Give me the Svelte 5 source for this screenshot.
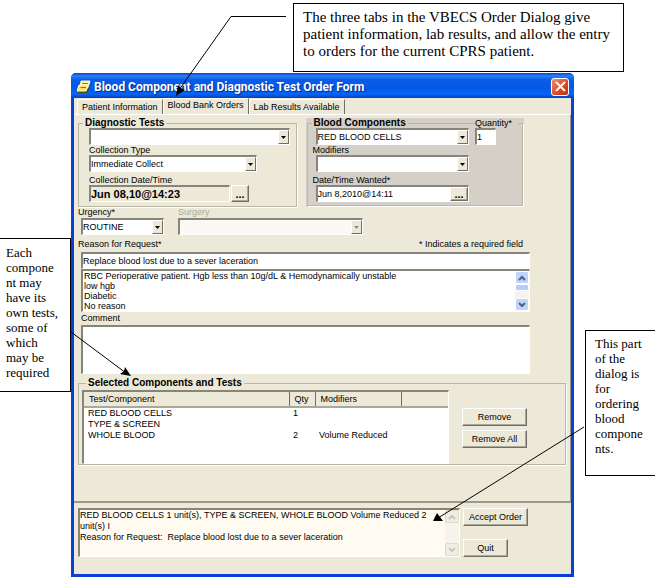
<script>
  const tabs = ['Patient Information', 'Blood Bank Orders', 'Lab Results Available'];
  let active = $state(1);
  let quantity = $state('1');
  let wanted = $state('Jun 8,2010@14:11');
  let collected = $state('Jun 08,10@14:23');
  let reason = $state('Replace blood lost due to a sever laceration');
  let comment = $state('');

  const reasons = [
    'RBC Perioperative patient. Hgb less than 10g/dL & Hemodynamically unstable',
    'low hgb',
    'Diabetic',
    'No reason'
  ];
  const items = [
    { name: 'RED BLOOD CELLS', qty: '1', modifiers: '' },
    { name: 'TYPE & SCREEN', qty: '', modifiers: '' },
    { name: 'WHOLE BLOOD', qty: '2', modifiers: 'Volume Reduced' }
  ];
  const summary =
    'RED BLOOD CELLS 1 unit(s), TYPE & SCREEN, WHOLE BLOOD Volume Reduced 2\nunit(s) I\nReason for Request:  Replace blood lost due to a sever laceration';
</script>

{#snippet combo(id, value, disabled = false, label = undefined)}
  <span class="combo" class:disabled>
    <select {id} {disabled} aria-label={label}><option>{value}</option></select>
    <span class="drop" aria-hidden="true">
      <svg width="5" height="3" viewBox="0 0 5 3"><path d="M0 0H5L2.5 3Z" fill="currentColor" /></svg>
    </span>
  </span>
{/snippet}

{#snippet scrollbar(off)}
  <span class="scroll" class:off aria-hidden="true">
    <span class="knob"><svg width="8" height="6" viewBox="0 0 8 6"><path d="M1 5L4 2L7 5" /></svg></span>
    {#if !off}<span class="thumb"></span>{/if}
    <span class="knob last"><svg width="8" height="6" viewBox="0 0 8 6"><path d="M1 1L4 4L7 1" /></svg></span>
  </span>
{/snippet}

<div class="page">
  <aside class="note top">
    The three tabs in the VBECS Order Dialog give patient information, lab results, and allow the entry to orders for the current CPRS patient.
  </aside>

  <div class="row">
    <aside class="note left">Each component may have its own tests, some of which may be required</aside>

    <main class="window">
      <header class="title">
        <svg width="14" height="14" viewBox="0 0 14 14">
          <path d="M4 1H13L11 8H3Z" fill="#fff3a0" stroke="#f8f4d0" />
          <path d="M2 5H11L9 11H0Z" fill="#ffe45c" stroke="#fffbe0" />
          <path d="M1 12.500H10L13 5" fill="none" stroke="#4a4420" />
          <path d="M5 3.500H11M3.500 7.500H9" stroke="#8a7b20" />
        </svg>
        <h1>Blood Component and Diagnostic Test Order Form</h1>
        <button class="close" aria-label="Close">
          <svg width="11" height="11" viewBox="0 0 11 11"><path d="M1 1L10 10M10 1L1 10" stroke="#fff" stroke-width="2" /></svg>
        </button>
      </header>

      <div class="tabs" role="tablist">
        {#each tabs as tab, i}
          <button role="tab" aria-selected={active === i} class:active={active === i} onclick={() => (active = i)}>{tab}</button>
        {/each}
      </div>

      <section class="panel">
        <div class="groups">
          <fieldset class="group tests">
            <legend>Diagnostic Tests</legend>
            {@render combo('test', '', false, 'Diagnostic Tests')}
            <label class="cap" for="ctype">Collection Type</label>
            <div class="short">{@render combo('ctype', 'Immediate Collect')}</div>
            <label class="cap date" for="cdate">Collection Date/Time</label>
            <div class="pick">
              <input id="cdate" class="sunk bold" bind:value={collected} />
              <button class="dots" aria-label="Choose collection date">...</button>
            </div>
          </fieldset>

          <div class="shade">
            <fieldset class="group">
              <legend>Blood Components</legend>
              <div class="split">
                <div class="main">
                  {@render combo('component', 'RED BLOOD CELLS', false, 'Blood Components')}
                  <label class="cap" for="mods">Modifiers</label>
                  {@render combo('mods', '')}
                  <label class="cap date" for="wdate">Date/Time Wanted*</label>
                  <div class="inset">
                    <input id="wdate" bind:value={wanted} />
                    <button class="dots" aria-label="Choose wanted date">...</button>
                  </div>
                </div>
                <div class="qty">
                  <label for="qty">Quantity*</label>
                  <input id="qty" class="sunk" bind:value={quantity} />
                </div>
              </div>
            </fieldset>
          </div>
        </div>

        <div class="order">
          <div class="urgency">
            <label for="urgency">Urgency*</label>
            <div class="indent">{@render combo('urgency', 'ROUTINE')}</div>
          </div>
          <div class="surgery">
            <label for="surgery">Surgery</label>
            {@render combo('surgery', '', true)}
          </div>
        </div>

        <div class="heads">
          <label for="reason">Reason for Request*</label>
          <span>* Indicates a required field</span>
        </div>
        <div class="wide">
          <input id="reason" class="sunk" bind:value={reason} />
          <div class="sunk listbox">
            <ul role="listbox" aria-label="Reasons">
              {#each reasons as r}<li role="option" aria-selected="false">{r}</li>{/each}
            </ul>
            {@render scrollbar(false)}
          </div>
          <label for="comment">Comment</label>
          <textarea id="comment" class="sunk" bind:value={comment}></textarea>
        </div>

        <fieldset class="group selected">
          <legend>Selected Components and Tests</legend>
          <div class="listed">
            <div class="sunk grid">
              <table>
                <thead>
                  <tr><th class="c1">Test/Component</th><th class="c2">Qty</th><th class="c3">Modifiers</th><th></th></tr>
                </thead>
                <tbody>
                  {#each items as item}
                    <tr><td>{item.name}</td><td>{item.qty}</td><td>{item.modifiers}</td><td></td></tr>
                  {/each}
                </tbody>
              </table>
            </div>
            <div class="actions">
              <button class="btn">Remove</button>
              <button class="btn">Remove All</button>
            </div>
          </div>
        </fieldset>
      </section>

      <footer>
        <div class="sunk memo">
          <textarea readonly aria-label="Order summary" value={summary}></textarea>
          {@render scrollbar(true)}
        </div>
        <div class="finish">
          <button class="btn">Accept Order</button>
          <button class="btn quit">Quit</button>
        </div>
      </footer>
    </main>

    <aside class="note right">This part of the dialog is for ordering blood components.</aside>
  </div>

  <svg class="arrow a1" width="116" height="82" viewBox="0 0 116 82">
    <path d="M116 1.500H61L9 75" /><path class="head" d="M6 81L8 70L11 73L15 75Z" />
  </svg>
  <svg class="arrow a2" width="62" height="47" viewBox="0 0 62 47">
    <path d="M1 1L56 42" /><path class="head" d="M61 45L50 43L54 40L55 36Z" />
  </svg>
  <svg class="arrow a3" width="156" height="98" viewBox="0 0 156 98">
    <path d="M155 1L9 92" /><path class="head" d="M4 95L8 87L11 91L14 95Z" />
  </svg>
</div>

<style>
  :global(body) { margin: 0; background: #fff; }
  .page { position: relative; padding-top: 3px; color: #000; font: 9px/11px 'Liberation Sans', Arial, sans-serif; }
  .page * { box-sizing: border-box; }
  input, select, textarea, button { font: inherit; color: inherit; margin: 0; padding: 0; border: 0; border-radius: 0; background: none; min-width: 0; }

  .note { border: 1px solid #000; background: #fff; font-family: 'Liberation Serif', 'Times New Roman', serif; }
  .top { margin: 0 31px 0 293px; min-height: 69px; padding: 5px 9px; font-size: 15px; line-height: 17px; }
  .row { display: flex; align-items: flex-start; }
  .left, .right { font-size: 13px; line-height: 15px; overflow-wrap: anywhere; flex: none; }
  .left { width: 71px; min-height: 154px; margin-top: 166px; padding: 6px 10px 0 6px; border-left: 0; }
  .right { width: 70px; min-height: 146px; margin: 258px 0 0 11px; padding: 5px 6px 0 9px; border-right: 0; }

  .window { flex: 1; min-width: 0; margin-top: 1px; border: 3px solid #0a3fd8; border-top: 0; border-radius: 5px 5px 0 0; background: #ece9d8; }
  .title { display: flex; align-items: center; gap: 3px; height: 25px; margin: 0 -3px; padding: 2px 5px 0 6px; border-radius: 5px 5px 0 0; background: linear-gradient(#0a45c8, #2a80f8 3px, #0a5be8 7px, #0658ea 16px, #0866f8 21px, #0340b8); }
  h1 { flex: 1; margin: 0; color: #fff; font: bold 12px/16px Roboto, 'Noto Sans', sans-serif; white-space: nowrap; text-shadow: 1px 1px 1px #0a2a80; }
  .close { display: grid; place-items: center; width: 18px; height: 18px; border: 1px solid #fff; border-radius: 3px; background: linear-gradient(135deg, #f09070, #e0502c 50%, #b83010); }

  .tabs { display: flex; align-items: flex-end; height: 16px; padding-left: 3px; }
  .tabs button { height: 15px; padding: 0 4px; border: 1px solid #fff; border-right: 1px solid #716f64; border-bottom: 0; white-space: nowrap; }
  .tabs .active { height: 16px; padding-bottom: 3px; }

  .panel { padding: 3px 4px 36px 4px; border-top: 1px solid #fff; border-right: 1px solid #9d9a8a; border-bottom: 2px solid #9d9a8a; }
  .groups { display: grid; grid-template-columns: repeat(2, minmax(0, 1fr)); gap: 9px; padding-right: 42px; }
  .group { min-width: 0; margin: 0; padding: 0; border: 1px solid #b9b6a6; box-shadow: 1px 1px #fff; }
  legend { margin-left: 4px; padding: 0 2px; font: bold 10px/10px 'Liberation Sans', Arial, sans-serif; }
  .tests { padding: 0 6px 3px 10px; }
  .tests legend { margin-left: -6px; }
  .shade { padding: 0 1px 1px; background: #d4d0c8; }
  .shade .group { padding: 0 4px 3px 8px; }
  .shade legend { margin-left: -4px; }
  .shade .cap { margin-left: -3px; }

  .combo, .sunk, .inset { border: 1px solid #fff; border-top: 2px solid #87847a; border-left: 2px solid #87847a; background: #fff; }
  .combo { display: flex; height: 17px; width: 100%; }
  .combo select { flex: 1; appearance: none; line-height: 13px; }
  .combo select:disabled { opacity: 1; }
  .drop, .dots, .btn { border: 1px solid; border-color: #fff #716f64 #716f64 #fff; background: #ece9d8; }
  .dots, .btn { box-shadow: inset -1px -1px #aca899; }
  .drop { display: grid; place-items: center; width: 11px; }
  .disabled { background: #faf9f4; color: #8f8c80; }
  .cap { display: block; height: 10px; line-height: 10px; white-space: nowrap; }
  .date { margin-top: 3px; }
  .short { width: 168px; }
  .pick { display: flex; gap: 1px; width: 160px; }
  .pick input { flex: 1; background: #ece9d8; }
  .bold { font: bold 11px/13px 'Liberation Sans', Arial, sans-serif; }
  .dots { flex: none; width: 18px; font: bold 11px/8px 'Liberation Sans', Arial, sans-serif; }
  .sunk { height: 17px; }
  .inset { display: flex; height: 17px; }
  .inset input { flex: 1; }
  .split { display: flex; gap: 6px; }
  .main { flex: 1; min-width: 0; }
  .qty { width: 43px; margin-top: -10px; }
  .qty label { display: block; height: 10px; line-height: 10px; background: #d4d0c8; }
  .qty input { display: block; width: 21px; }

  .order { display: flex; gap: 14px; }
  .order label { display: block; height: 11px; }
  .urgency { width: 86px; }
  .indent { padding-left: 3px; }
  .surgery { width: 185px; color: #aca899; }
  .heads { display: flex; justify-content: space-between; height: 17px; padding: 4px 43px 0 0; }
  .wide { display: flex; flex-direction: column; padding: 0 36px 0 3px; }
  .wide label { height: 13px; line-height: 13px; }
  .listbox { display: flex; height: 43px; }
  ul { flex: 1; margin: 0; padding: 0 0 0 1px; list-style: none; line-height: 10px; }
  .wide textarea { height: 49px; resize: none; }

  .scroll { display: flex; flex-direction: column; width: 14px; background: #f4f3ec; }
  .knob { display: grid; place-items: center; height: 13px; border: 1px solid #fff; border-radius: 2px; background: #c2d3fc; }
  .knob path { fill: none; stroke: #4d6185; stroke-width: 2; }
  .last { margin-top: auto; }
  .thumb { height: 7px; border: 1px solid #fff; border-radius: 2px; background: #b8ccfa; }
  .off .knob { background: #f0eee4; border-color: #dedbcc; }
  .off .knob path { stroke: #c9c7ba; }

  .selected { margin-top: 4px; padding: 2px 3px 0 3px; }
  .listed { display: flex; }
  .grid { flex: 1; height: 74px; }
  table { width: 100%; border-collapse: collapse; table-layout: fixed; }
  th { height: 15px; padding: 0 0 0 5px; text-align: left; font-weight: normal; background: #ece9d8; border-right: 1px solid #716f64; border-bottom: 2px solid #aca899; }
  th:last-child { border-right: 0; }
  td { height: 11px; padding: 0 0 0 4px; white-space: nowrap; }
  .c1 { width: 205px; }
  .c2 { width: 26px; }
  .c3 { width: 86px; }
  .actions { display: grid; gap: 4px; align-content: start; width: 113px; padding: 18px 35px 0 13px; }
  .btn { height: 18px; white-space: nowrap; }

  footer { display: flex; gap: 3px; padding: 5px 43px 17px 4px; }
  .memo { flex: 1; display: flex; height: 49px; background: #fffbf0; }
  .memo textarea { flex: 1; resize: none; overflow: hidden; white-space: pre-wrap; }
  .finish { display: flex; flex-direction: column; justify-content: space-between; width: 65px; }
  .quit { width: 45px; }

  .arrow { position: absolute; pointer-events: none; fill: none; stroke: #000; }
  .arrow .head { fill: #000; stroke: none; }
  .a1 { left: 170px; top: 15px; }
  .a2 { left: 70px; top: 331px; }
  .a3 { right: 70px; top: 426px; }
</style>
